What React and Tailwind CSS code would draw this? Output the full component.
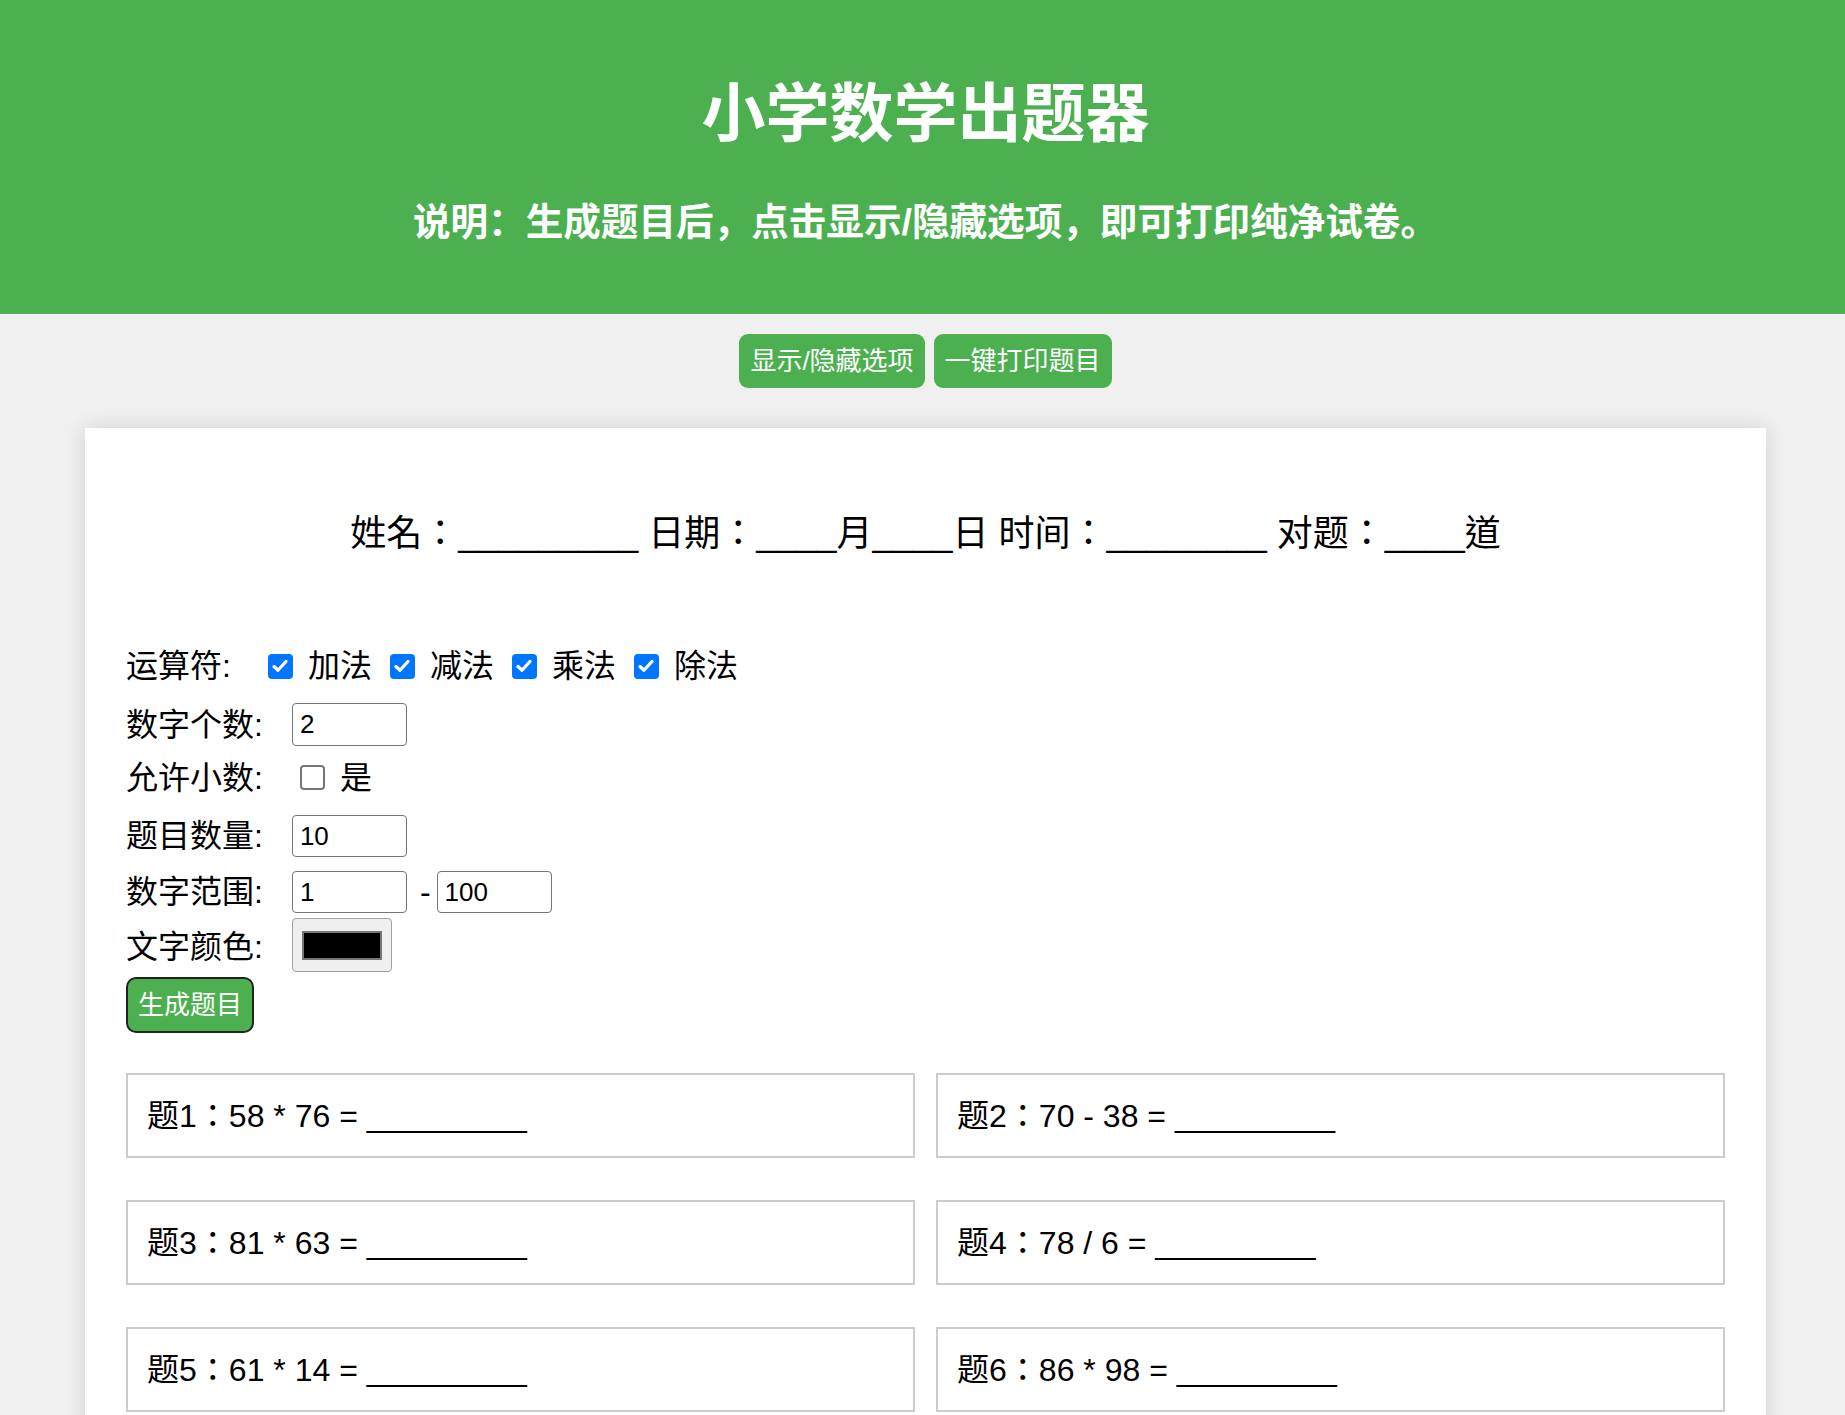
import React from "react";

const SC = "font-['Liberation_Sans','Noto_Sans_CJK_SC',sans-serif]";
const TC = "font-['Liberation_Sans','Noto_Sans_CJK_TC',sans-serif]";

function Check({ checked }) {
  if (checked) {
    return (
      <span className="inline-flex items-center justify-center w-[25px] h-[25px] rounded-[4px] bg-[#0075ff] shrink-0">
        <svg viewBox="0 0 16 16" className="w-[20px] h-[20px]">
          <path d="M3.2 8.4 L6.4 11.4 L12.8 4.4" fill="none" stroke="#ffffff" strokeWidth="2.6" strokeLinecap="round" strokeLinejoin="round" />
        </svg>
      </span>
    );
  }
  return <span className="inline-block w-[25px] h-[25px] rounded-[4px] border-2 border-[#767676] bg-white shrink-0" />;
}

const problems = [
  "58 * 76",
  "70 - 38",
  "81 * 63",
  "78 / 6",
  "61 * 14",
  "86 * 98",
  "45 + 27",
  "93 - 56",
  "12 * 34",
  "84 / 7",
];

function TextInput({ value, h }) {
  return (
    <input
      type="text"
      defaultValue={value}
      className={`w-[115px] ${h} border border-[#767676] rounded-[4px] px-[7px] text-[26px] text-black bg-white outline-none ${SC}`}
    />
  );
}

export default function App() {
  const ops = ["加法", "减法", "乘法", "除法"];
  return (
    <div className={`min-h-screen bg-[#f0f0f0] ${SC} text-black pb-[60px]`}>
      <header className="bg-[#4CAF50] h-[314px] text-white text-center pl-[6px]">
        <h1 className="text-[64px] font-bold leading-[80px] pt-[74px]">小学数学出题器</h1>
        <p className="text-[37.6px] font-bold leading-[50px] mt-[43px]">说明：生成题目后，点击显示/隐藏选项，即可打印纯净试卷。</p>
      </header>

      <div className="flex justify-center gap-[9px] mt-[20px] pl-[6px]">
        <button className="h-[54px] px-[11px] rounded-[9px] bg-[#4CAF50] text-white text-[26px] leading-none">显示/隐藏选项</button>
        <button className="h-[54px] px-[11px] rounded-[9px] bg-[#4CAF50] text-white text-[26px] leading-none">一键打印题目</button>
      </div>

      <div className="mt-[40px] ml-[85px] w-[1681px] bg-white shadow-[0_0_20px_rgba(0,0,0,0.12)] px-[41px] pt-[81px] pb-[60px]">
        <div className={`text-center text-[36px] leading-[50px] ${TC}`}>
          姓名：_________ 日期：____月____日 时间：________ 对题：____道
        </div>

        <div className="mt-[82px] text-[32px]">
          <div className="flex items-center h-[50px]">
            <span className="leading-[40px] mr-[29px]">运算符:</span>
            {ops.map((o, i) => (
              <span key={o} className={`flex items-center ${i === 0 ? "ml-[8px]" : "ml-[18px]"}`}>
                <Check checked />
                <span className="ml-[15px] leading-[40px]">{o}</span>
              </span>
            ))}
          </div>

          <div className="flex items-center h-[43px] mt-[12px]">
            <span className="leading-[40px] mr-[29px]">数字个数:</span>
            <TextInput value="2" h="h-[43px]" />
          </div>

          <div className="flex items-center h-[50px] mt-[6px]">
            <span className="leading-[40px] mr-[29px] pt-[2px]">允许小数:</span>
            <span className="ml-[8px] flex items-center">
              <Check checked={false} />
              <span className="ml-[15px] leading-[40px] pt-[2px]">是</span>
            </span>
          </div>

          <div className="flex items-center h-[42px] mt-[13px]">
            <span className="leading-[40px] mr-[29px]">题目数量:</span>
            <TextInput value="10" h="h-[42px]" />
          </div>

          <div className="flex items-center h-[42px] mt-[14px]">
            <span className="leading-[40px] mr-[29px]">数字范围:</span>
            <TextInput value="1" h="h-[42px]" />
            <span className="ml-[13px] mr-[6px] leading-[40px]">-</span>
            <TextInput value="100" h="h-[42px]" />
          </div>

          <div className="flex items-center h-[54px] mt-[5px]">
            <span className="leading-[40px] mr-[29px] pt-[3px]">文字颜色:</span>
            <span className="w-[100px] h-[54px] bg-[#efefef] border border-[#a0a0a0] rounded-[4px] flex items-center justify-center">
              <span className="w-[80px] h-[29px] bg-black border-2 border-[#777777]" />
            </span>
          </div>

          <button className="mt-[5px] w-[128px] h-[56px] rounded-[10px] bg-[#4CAF50] border-2 border-[#222222] text-white text-[26px] leading-none flex items-center justify-center">
            生成题目
          </button>
        </div>

        <div className="mt-[40px] grid grid-cols-2 gap-x-[21px] gap-y-[42px]">
          {problems.map((p, i) => (
            <div key={i} className={`h-[85px] border-2 border-[#cccccc] bg-white flex items-center pl-[19px] text-[32px] ${TC}`}>
              题{i + 1}：{p} = _________
            </div>
          ))}
        </div>
      </div>
    </div>
  );
}
